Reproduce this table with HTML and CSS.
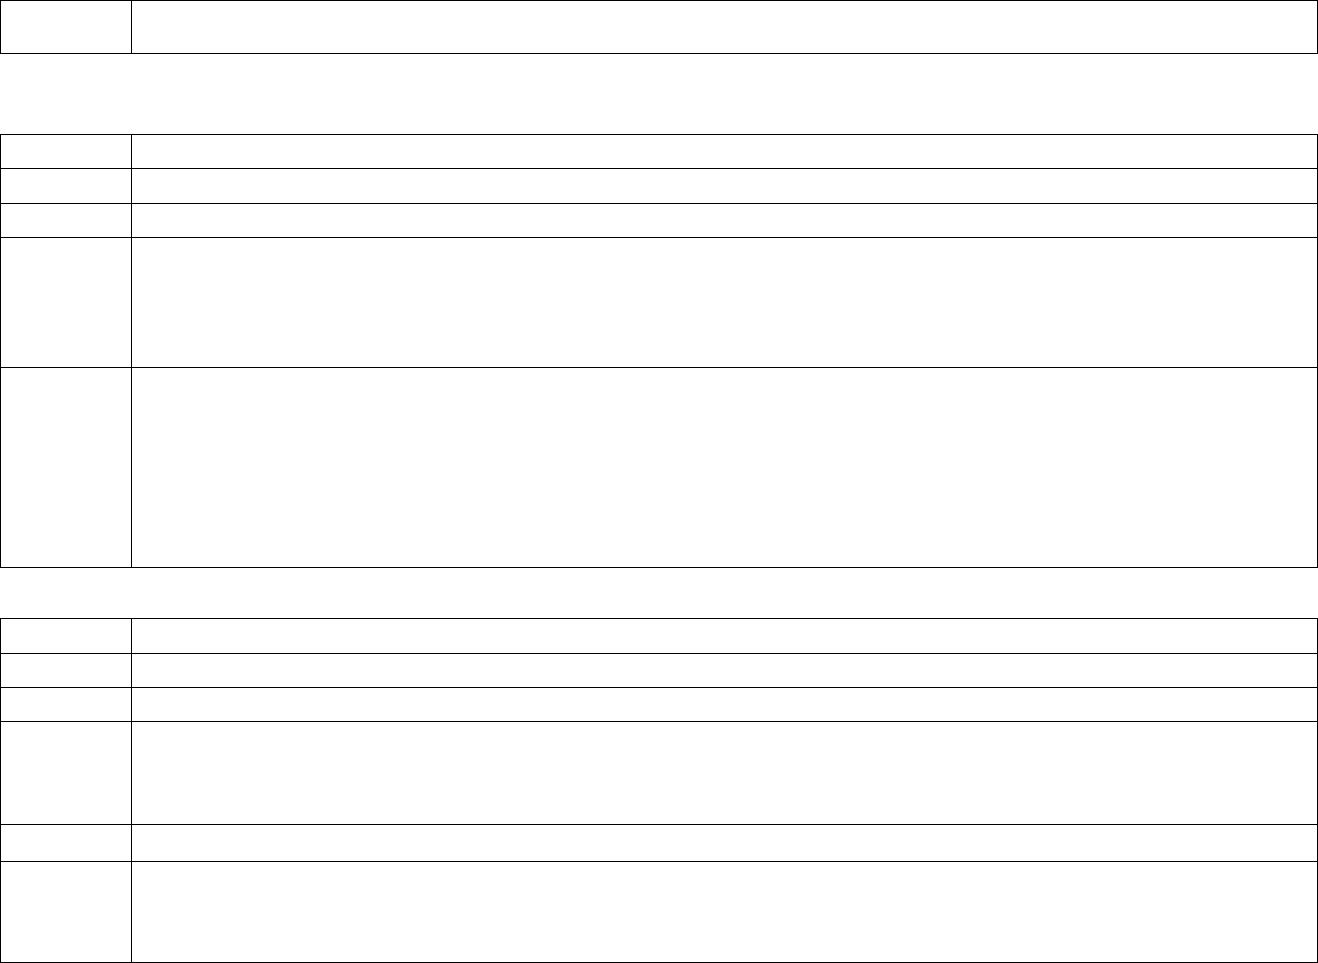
FILE: index.html
```html
<!DOCTYPE html>
<html lang="en">
<head>
<meta charset="utf-8">
<title>Tables</title>
<link rel="stylesheet" href="styles.css">
</head>
<body>
<div class="page">
  <div class="tbl">
    <div class="row h53"><div class="c1"></div><div class="c2"></div></div>
  </div>

  <div class="tbl t2">
    <div class="row h34"><div class="c1"></div><div class="c2"></div></div>
    <div class="row h35"><div class="c1"></div><div class="c2"></div></div>
    <div class="row h34"><div class="c1"></div><div class="c2"></div></div>
    <div class="row h130"><div class="c1"></div><div class="c2"></div></div>
    <div class="row h200"><div class="c1"></div><div class="c2"></div></div>
  </div>

  <div class="tbl t3">
    <div class="row h35"><div class="c1"></div><div class="c2"></div></div>
    <div class="row h34"><div class="c1"></div><div class="c2"></div></div>
    <div class="row h34"><div class="c1"></div><div class="c2"></div></div>
    <div class="row h103"><div class="c1"></div><div class="c2"></div></div>
    <div class="row h37"><div class="c1"></div><div class="c2"></div></div>
    <div class="row h101"><div class="c1"></div><div class="c2"></div></div>
  </div>
</div>
</body>
</html>
```

FILE: styles.css
```css
* { box-sizing: border-box; }
html, body { margin: 0; padding: 0; background: #fff; }
body { font-family: "Liberation Sans", Arial, sans-serif; font-size: 14px; color: #000; }
.page { display: flex; flex-direction: column; width: 1318px; }
.tbl { border-top: 1px solid #000; border-left: 1px solid #000; display: flex; flex-direction: column; }
.t2 { margin-top: 80px; }
.t3 { margin-top: 50px; }
.row { display: flex; }
.c1 { width: 131px; flex: none; border-right: 1px solid #000; border-bottom: 1px solid #000; }
.c2 { flex: 1; border-right: 1px solid #000; border-bottom: 1px solid #000; }
.h34 { height: 34px; }
.h35 { height: 35px; }
.h37 { height: 37px; }
.h53 { height: 53px; }
.h101 { height: 101px; }
.h103 { height: 103px; }
.h130 { height: 130px; }
.h200 { height: 200px; }
```
